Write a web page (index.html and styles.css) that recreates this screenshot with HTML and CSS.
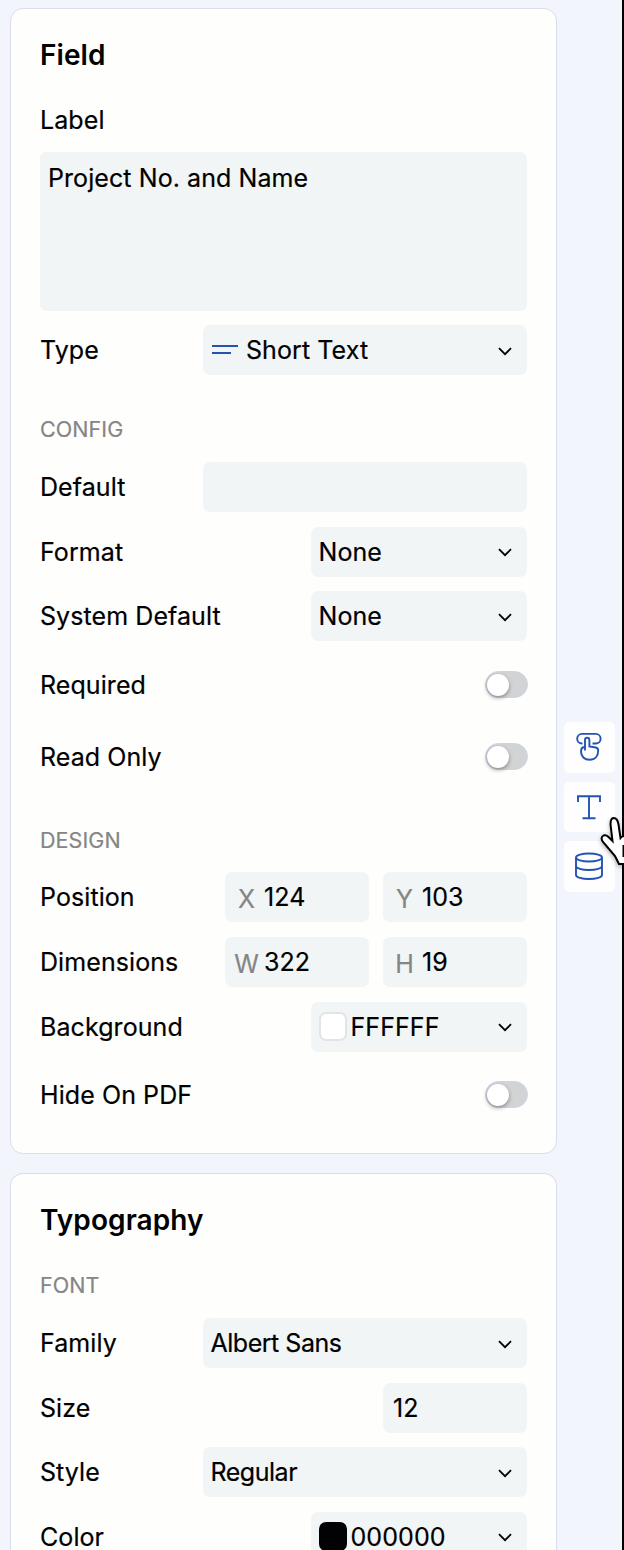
FILE: index.html
```html
<!DOCTYPE html>
<html lang="en">
<head>
<meta charset="utf-8">
<title>Field settings</title>
<link rel="stylesheet" href="styles.css">
</head>
<body>
<svg class="defs" width="0" height="0"><defs><symbol id="chev" viewBox="0 0 14 9"><path d="M1 1.200 7 7.200l6-6" fill="none" stroke="#000" stroke-width="1.800"/></symbol></defs></svg>
<main class="panel">
  <section class="card card-field">
    <h2 class="title">Field</h2>
    <label class="row label-row"><span>Label</span></label>
    <div class="area"><span>Project No. and Name</span></div>
    <div class="row"><span>Type</span><div class="box wide"><svg class="lines" width="26" height="12" viewBox="0 0 26 12"><path d="M0 2h26M0 9h19" stroke="#2454b0" stroke-width="2"/></svg><span>Short Text</span><svg class="chev"><use href="#chev"/></svg></div></div>
    <h3 class="group config">CONFIG</h3>
    <div class="rows">
      <div class="row"><span>Default</span><div class="box wide"></div></div>
      <div class="row"><span>Format</span><div class="box mid"><span>None</span><svg class="chev"><use href="#chev"/></svg></div></div>
      <div class="row"><span>System Default</span><div class="box mid"><span>None</span><svg class="chev"><use href="#chev"/></svg></div></div>
    </div>
    <div class="row toggle-row first"><span>Required</span><i class="toggle"></i></div>
    <div class="row toggle-row"><span>Read Only</span><i class="toggle"></i></div>
    <h3 class="group design">DESIGN</h3>
    <div class="rows design-rows">
      <div class="row"><span>Position</span><div class="pair"><div class="box small"><b>X</b><span>124</span></div><div class="box small"><b>Y</b><span>103</span></div></div></div>
      <div class="row"><span>Dimensions</span><div class="pair"><div class="box small"><b>W</b><span>322</span></div><div class="box small"><b>H</b><span>19</span></div></div></div>
      <div class="row"><span>Background</span><div class="box mid"><i class="swatch"></i><span>FFFFFF</span><svg class="chev"><use href="#chev"/></svg></div></div>
    </div>
    <div class="row toggle-row hide"><span>Hide On PDF</span><i class="toggle"></i></div>
  </section>
  <section class="card card-type">
    <h2 class="title">Typography</h2>
    <h3 class="group font">FONT</h3>
    <div class="rows">
      <div class="row"><span>Family</span><div class="box wide albert"><span>Albert Sans</span><svg class="chev"><use href="#chev"/></svg></div></div>
      <div class="row"><span>Size</span><div class="box small size"><span>12</span></div></div>
      <div class="row"><span>Style</span><div class="box wide albert"><span>Regular</span><svg class="chev"><use href="#chev"/></svg></div></div>
      <div class="row"><span>Color</span><div class="box mid"><i class="swatch black"></i><span>000000</span><svg class="chev"><use href="#chev"/></svg></div></div>
    </div>
  </section>
</main>
<nav class="tabs">
  <button class="tab"><svg width="28" height="32" viewBox="0 0 28 32"><path d="M7.500 12.500H7A4.800 4.800 0 0 1 7 2.900h13.800a4.800 4.800 0 0 1 0 9.600h-3.300"/><path d="M10 19.500V9a2.200 2.200 0 0 1 4.400 0v6.500l6.300 1q2.500.5 2.500 3c0 5.300-3 9.300-8.600 9.300-5.200 0-8.600-3.400-8.600-8.300 0-3.200 1-4.500 4-4.500"/></svg></button>
  <button class="tab"><svg width="28" height="28" viewBox="0 0 28 28"><path d="M3 9V3.200h22V9M14 3.200v22M7.500 25.200h13"/></svg></button>
  <button class="tab"><svg width="30" height="30" viewBox="0 0 30 30"><ellipse cx="15" cy="6.500" rx="13" ry="4"/><path d="M2 6.500V24c0 2.300 5.800 4 13 4s13-1.700 13-4V6.500M2 15c0 2.300 5.800 4 13 4s13-1.700 13-4"/></svg></button>
</nav>
<div class="edge"></div>
<svg class="cursor" width="26" height="56" viewBox="0 0 26 56"><path d="M30 52H21L17 44 5 30Q2 25.500 5.500 23.500 8 22.500 10.500 25l4 4-1.800-15Q12 6.500 15.500 6 19.500 6 20.500 12.500L22.500 26q2-2.500 7-2" fill="#fff" stroke="#000" stroke-width="2"/><path d="M25.500 33v12" stroke="#000" stroke-width="2"/></svg>
</body>
</html>
```
FILE: styles.css
```css
* { box-sizing: border-box; }
html { overflow: hidden; }
body {
  margin: 0; width: 624px; height: 1550px; overflow: hidden; position: relative;
  display: flex; align-items: flex-start; background: #f2f5fb; color: #000;
  font: 400 25px/30px Inter, "Liberation Sans", sans-serif;
  letter-spacing: .08px;
  -webkit-text-stroke: .2px currentColor;
}
.defs { position: absolute; }
.panel { width: 547px; height: 1550px; padding: 8px 0 0; margin-left: 10px; display: flex; flex-direction: column; gap: 19px; flex: none; }
.card { background: #fefefd; border: 1px solid #dadeea; border-radius: 13px; padding: 29px 29px 0; flex: none; }
.card-field { height: 1146px; }
.card-type { height: 377px; border-bottom: 0; border-radius: 13px 13px 0 0; overflow: hidden; }
.title { margin: 0; font-size: 28px; font-weight: 600; line-height: 34px; -webkit-text-stroke: 0; }
.row { display: flex; align-items: center; justify-content: space-between; height: 50px; line-height: 24px; white-space: nowrap; }
.rows { display: flex; flex-direction: column; gap: 14.600px; }
.design-rows { gap: 15px; }
.label-row { margin-top: 23px; }
.area { height: 159px; margin: 7px 0 14px; padding: 11px 8px; background: #f2f5f5; border-radius: 6px; }
.group { margin: 0; font-size: 21.500px; font-weight: 400; line-height: 26px; color: #858585; }
.config { margin: 41px 0 20px; }
.design { margin: 34px 0 19px; }
.font { margin: 35px 0 20px; }
.box { height: 50px; display: flex; align-items: center; background: #f2f5f5; border-radius: 7px; padding: 0 15px 0 7.500px; }
.wide { width: 324px; }
.mid { width: 216px; }
.small { width: 144px; padding-left: 10px; }
.pair { display: flex; gap: 14px; }
.small b { width: 29px; font-weight: 400; color: #858585; position: relative; top: 2px; text-align: center; margin-left: -3px; margin-right: 3px; }
.lines { margin: 0 8px 0 1.500px; }
.chev { width: 14px; height: 9px; margin-left: auto; position: relative; top: 1px; }
.albert { letter-spacing: -.48px; }
.toggle { display: block; width: 43px; height: 27px; margin-right: -1px; border-radius: 14px; background: #d2d3d5; border: 1px solid #ccd5e8; }
.toggle::before { content: ""; display: block; width: 22px; height: 22px; margin: 2px 1px; border-radius: 50%; background: #fff; box-shadow: 0 2px 4px rgba(0,0,0,.35); }
.toggle-row { height: 72px; }
.first { margin-top: 7.400px; }
.hide { margin-top: 7px; }
.swatch { flex: none; width: 28px; height: 29px; border: 2px solid #e3e4e6; border-radius: 7px; background: #fff; margin-right: 4px; }
.black { background: #020204; border-color: #020204; }
.tabs { margin: 722px 0 0 7px; display: flex; flex-direction: column; gap: 9px; }
.tab { width: 51px; height: 50.500px; border: 0; padding: 0; border-radius: 5px; background: #fefefe; display: grid; place-items: center; }
.tab svg { fill: none; stroke: #2453b3; stroke-width: 1.900; position: relative; left: -.5px; }
.edge { position: absolute; right: 0; top: 0; width: 2px; height: 1550px; background: #000; }
.cursor { position: absolute; left: 598px; top: 812px; filter: drop-shadow(0 2px 2px rgba(0,0,0,.3)); }
```
